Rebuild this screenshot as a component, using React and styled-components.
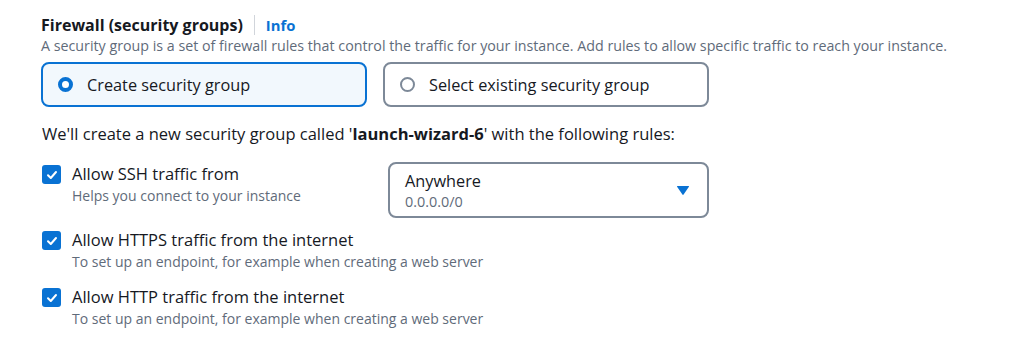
import React from "react";
import styled, { createGlobalStyle } from "styled-components";

const GlobalStyle = createGlobalStyle`
  body {
    margin: 0;
    background: #ffffff;
    font-family: "Open Sans", "Noto Sans", sans-serif;
    color: #16191f;
  }
`;

// 전체 영역
const Page = styled.div`
  width: 1024px;
  height: 342px;
  box-sizing: border-box;
  padding: 14px 0 0 41px;
  overflow: hidden;
`;

// 헤더
const Header = styled.div`
  display: flex;
  align-items: center;
  height: 22px;
`;

const Title = styled.h3`
  margin: 0;
  font-size: 16px;
  font-weight: 700;
  color: #16191f;
`;

const Divider = styled.span`
  width: 1px;
  height: 20px;
  background: #d1d5db;
  margin: 0 11px 0 11px;
`;

const InfoLink = styled.a`
  font-size: 14.8px;
  font-weight: 700;
  color: #0972d3;
  text-decoration: none;
`;

const Description = styled.p`
  margin: 1px 0 0;
  font-size: 14.25px;
  color: #5f6b7a;
  line-height: 18px;
  white-space: nowrap;
`;

// 라디오 카드 영역
const Tiles = styled.div`
  display: flex;
  gap: 16px;
  margin-top: 7px;
`;

const Tile = styled.div`
  width: 326px;
  height: 45px;
  box-sizing: border-box;
  display: flex;
  align-items: center;
  padding-left: 15px;
  border-radius: 8px;
  border: 2px solid ${(props) => (props.selected ? "#0972d3" : "#7d8998")};
  background: ${(props) => (props.selected ? "#f2f8fd" : "#ffffff")};
`;

const Radio = styled.span`
  width: 15px;
  height: 15px;
  box-sizing: border-box;
  border-radius: 50%;
  border: ${(props) => (props.checked ? "4.5px solid #0972d3" : "2px solid #7d8998")};
  background: #ffffff;
  margin-right: 14px;
`;

const TileLabel = styled.span`
  font-size: 16.3px;
  color: #16191f;
`;

const Summary = styled.p`
  margin: 16px 0 0 1px;
  font-size: 16.5px;
  color: #16191f;
  line-height: 22px;

  strong {
    font-weight: 700;
  }
`;

// 규칙 목록
const Rules = styled.div`
  display: flex;
  flex-direction: column;
  margin-top: 19px;
`;

const RuleRow = styled.div`
  display: flex;
  align-items: flex-start;
  margin-top: ${(props) => props.gap || "0px"};
`;

const Check = styled.span`
  width: 19px;
  height: 19px;
  border-radius: 3px;
  background: #0972d3;
  display: flex;
  align-items: center;
  justify-content: center;
  margin: 1px 11px 0 1px;
  flex-shrink: 0;
`;

const RuleText = styled.div`
  display: flex;
  flex-direction: column;
  width: 316px;
`;

const RuleLabel = styled.span`
  font-size: 16.5px;
  line-height: 20px;
  color: #16191f;
  white-space: nowrap;
`;

const RuleHint = styled.span`
  font-size: 14px;
  line-height: 18px;
  margin-top: 3px;
  color: #5f6b7a;
  white-space: nowrap;
`;

// 드롭다운
const Select = styled.div`
  width: 321px;
  height: 56px;
  box-sizing: border-box;
  border: 2px solid #7d8998;
  border-radius: 8px;
  display: flex;
  align-items: center;
  justify-content: space-between;
  padding: 0 17px 0 15px;
  margin-top: -2px;
`;

const SelectText = styled.div`
  display: flex;
  flex-direction: column;
  padding-top: 2px;
`;

const SelectValue = styled.span`
  font-size: 16.3px;
  line-height: 20px;
  color: #16191f;
`;

const SelectSub = styled.span`
  font-size: 14.4px;
  line-height: 18px;
  color: #5f6b7a;
  margin-top: 2px;
`;

const CheckIcon = () => (
  <svg width="12" height="12" viewBox="0 0 12 12">
    <path d="M2 6.2 L4.8 9 L10 3" fill="none" stroke="#fff" strokeWidth="2" strokeLinecap="round" strokeLinejoin="round" />
  </svg>
);

const Caret = () => (
  <svg width="14" height="11" viewBox="0 0 14 11">
    <path d="M1.5 1 H12.5 Q13.4 1 12.9 1.8 L7.6 9.6 Q7 10.4 6.4 9.6 L1.1 1.8 Q0.6 1 1.5 1 Z" fill="#0972d3" />
  </svg>
);

const rules = [
  { label: "Allow HTTPS traffic from the internet", hint: "To set up an endpoint, for example when creating a web server", gap: "12px" },
  { label: "Allow HTTP traffic from the internet", hint: "To set up an endpoint, for example when creating a web server", gap: "16px" },
];

const App = () => {
  return (
    <>
      <GlobalStyle />
      <Page>
        <Header>
          <Title>Firewall (security groups)</Title>
          <Divider />
          <InfoLink href="#">Info</InfoLink>
        </Header>
        <Description>
          A security group is a set of firewall rules that control the traffic for your instance. Add rules to allow specific traffic to reach your instance.
        </Description>
        <Tiles>
          <Tile selected>
            <Radio checked />
            <TileLabel>Create security group</TileLabel>
          </Tile>
          <Tile>
            <Radio />
            <TileLabel>Select existing security group</TileLabel>
          </Tile>
        </Tiles>
        <Summary>
          We'll create a new security group called '<strong>launch-wizard-6</strong>' with the following rules:
        </Summary>
        <Rules>
          <RuleRow>
            <Check><CheckIcon /></Check>
            <RuleText>
              <RuleLabel>Allow SSH traffic from</RuleLabel>
              <RuleHint>Helps you connect to your instance</RuleHint>
            </RuleText>
            <Select>
              <SelectText>
                <SelectValue>Anywhere</SelectValue>
                <SelectSub>0.0.0.0/0</SelectSub>
              </SelectText>
              <Caret />
            </Select>
          </RuleRow>
          {rules.map((r) => (
            <RuleRow key={r.label} gap={r.gap}>
              <Check><CheckIcon /></Check>
              <RuleText>
                <RuleLabel>{r.label}</RuleLabel>
                <RuleHint>{r.hint}</RuleHint>
              </RuleText>
            </RuleRow>
          ))}
        </Rules>
      </Page>
    </>
  );
};

export default App;
